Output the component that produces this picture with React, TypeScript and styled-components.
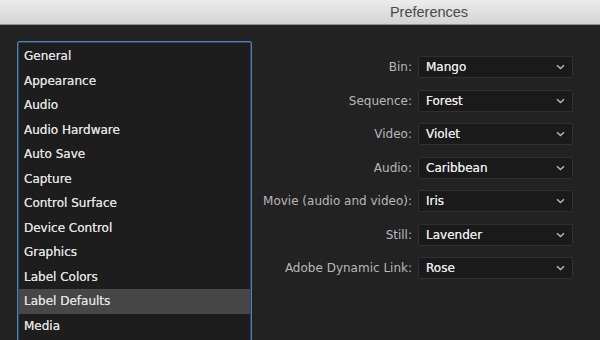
import React from "react";
import styled, { createGlobalStyle } from "styled-components";

const Global = createGlobalStyle`
  html, body { margin: 0; padding: 0; background: #222222; }
  body { font-family: "DejaVu Sans", "Liberation Sans", sans-serif; }
`;

const Window = styled.div`
  width: 600px;
  height: 340px;
  overflow: hidden;
  display: flex;
  flex-direction: column;
  background: #222222;
`;

const TitleBar = styled.div`
  height: 24px;
  flex: none;
  display: flex;
  align-items: center;
  justify-content: center;
  padding-left: 258px;
  background: linear-gradient(#ececec, #d3d3d3);
  border-bottom: 1px solid #8f8f8f;
  font-family: "Liberation Sans", Arial, sans-serif;
  font-size: 14.5px;
  color: #4a4a4a;
`;

const Body = styled.div`
  flex: 1;
  display: flex;
  align-items: flex-start;
  padding: 16px 0 0 17px;
`;

const ListBox = styled.div`
  width: 231px;
  height: 320px;
  flex: none;
  border: 1px solid #4f80b8;
  box-shadow: inset 0 0 0 1px #2b4664;
  border-radius: 2px;
  background: #1d1d1d;
  padding: 2px 1px 1px 1px;
  display: flex;
  flex-direction: column;
`;

const Item = styled.div<{ $selected?: boolean }>`
  height: 24.5px;
  flex: none;
  display: flex;
  align-items: center;
  padding-left: 5px;
  font-size: 12px;
  color: #e0e0e0;
  text-shadow: 0 0 0.3px #e0e0e0;
  background: ${(p) => (p.$selected ? "#474747" : "transparent")};
`;

const Form = styled.div`
  display: grid;
  grid-template-columns: 160px 155px;
  column-gap: 6px;
  row-gap: 11.5px;
  margin-top: 15px;
`;

const Label = styled.div`
  height: 22px;
  display: flex;
  align-items: center;
  justify-content: flex-end;
  font-size: 12px;
  color: #b8b8b8;
  white-space: nowrap;
`;

const Select = styled.div`
  height: 22px;
  box-sizing: border-box;
  display: flex;
  align-items: center;
  justify-content: space-between;
  padding: 0 7px 0 7px;
  background: #1a1a1a;
  border: 1px solid #303030;
  border-radius: 2px;
  font-size: 12px;
  color: #e8e8e8;
  text-shadow: 0 0 0.3px #e8e8e8;
`;

const Chevron = () => (
  <svg width="9" height="6" viewBox="0 0 9 6">
    <path d="M1 1.2 L4.5 4.6 L8 1.2" fill="none" stroke="#b8b8b8" strokeWidth="1.4" />
  </svg>
);

const items = [
  "General",
  "Appearance",
  "Audio",
  "Audio Hardware",
  "Auto Save",
  "Capture",
  "Control Surface",
  "Device Control",
  "Graphics",
  "Label Colors",
  "Label Defaults",
  "Media",
];

const fields: [string, string][] = [
  ["Bin:", "Mango"],
  ["Sequence:", "Forest"],
  ["Video:", "Violet"],
  ["Audio:", "Caribbean"],
  ["Movie (audio and video):", "Iris"],
  ["Still:", "Lavender"],
  ["Adobe Dynamic Link:", "Rose"],
];

export default function App() {
  return (
    <Window>
      <Global />
      <TitleBar>Preferences</TitleBar>
      <Body>
        <ListBox>
          {items.map((it) => (
            <Item key={it} $selected={it === "Label Defaults"}>
              {it}
            </Item>
          ))}
        </ListBox>
        <Form>
          {fields.map(([l, v]) => (
            <React.Fragment key={l}>
              <Label>{l}</Label>
              <Select>
                <span>{v}</span>
                <Chevron />
              </Select>
            </React.Fragment>
          ))}
        </Form>
      </Body>
    </Window>
  );
}
